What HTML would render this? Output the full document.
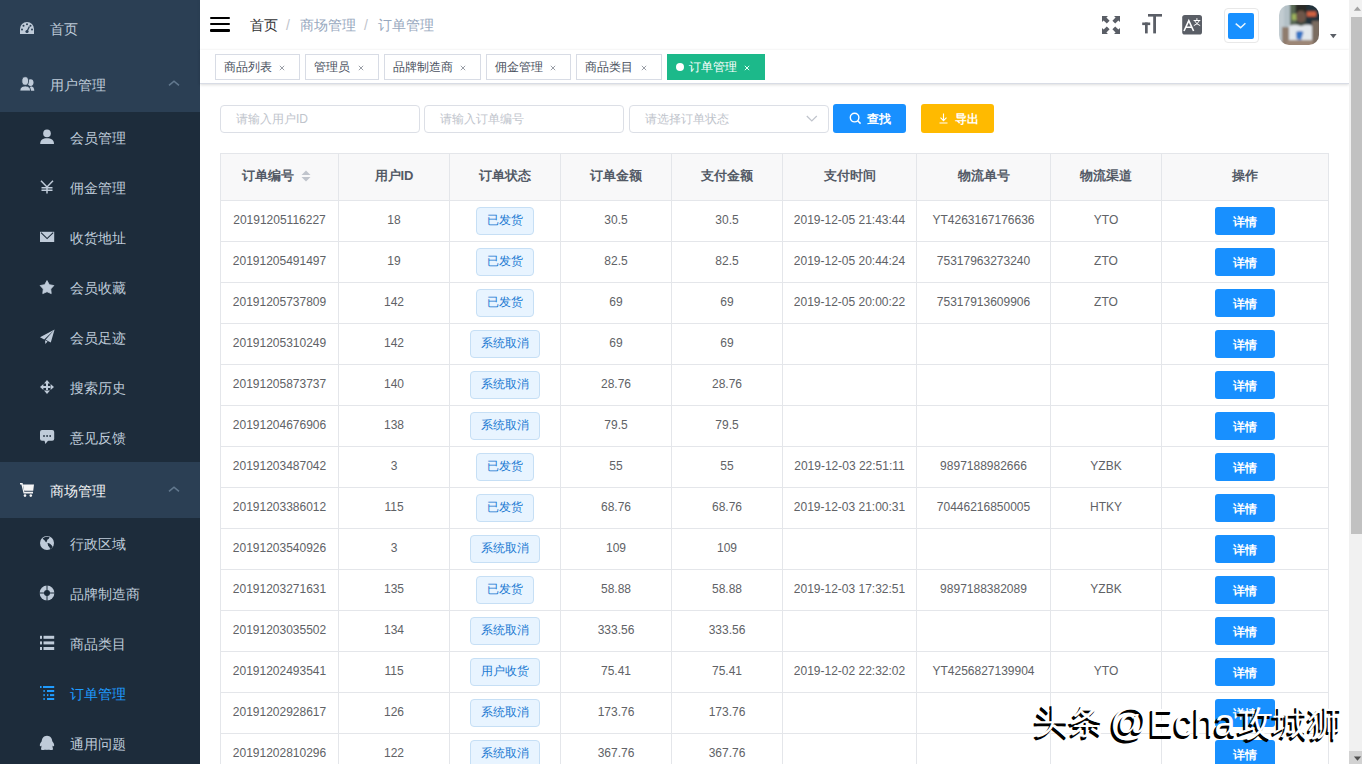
<!DOCTYPE html>
<html><head><meta charset="utf-8">
<style>
*{box-sizing:border-box}
html,body{margin:0;padding:0;width:1362px;height:764px;overflow:hidden;background:#fff;font-family:"Liberation Sans",sans-serif;position:relative}
.abs{position:absolute}
/* sidebar */
.sb{position:absolute;left:0;top:0;width:200px;height:764px;background:#2b3f54;overflow:hidden}
.sub{position:absolute;left:0;width:200px;background:#1d2c3b}
.mi{position:absolute;left:0;width:200px;color:#bfcbd9;font-size:14px}
.mi .tx{position:absolute;white-space:nowrap;line-height:16px}
.mi svg{position:absolute;fill:#bfcbd9}
.arr{position:absolute;left:168px;width:12px;height:8px}
/* navbar */
.nav{position:absolute;left:200px;top:0;width:1149px;height:50px;background:#fff;box-shadow:0 1px 4px rgba(0,21,41,.08)}
.bc{position:absolute;top:17px;font-size:14px;line-height:16px;white-space:nowrap;color:#97a8be}
/* tags */
.tags{position:absolute;left:200px;top:50px;width:1149px;height:34px;background:#fff;border-bottom:1px solid #d8dce5;box-shadow:0 1px 3px 0 rgba(0,0,0,.12),0 0 3px 0 rgba(0,0,0,.04)}
.tag{position:absolute;top:4px;height:26px;border:1px solid #d8dce5;color:#495060;background:#fff;font-size:12px;line-height:24px;padding:0 8px;white-space:nowrap}
.tag .x{display:inline-block;margin-left:6px;font-size:11px;color:#8a8f99}
/* filter */
.inp{position:absolute;top:105px;height:28px;border:1px solid #dcdfe6;border-radius:4px;color:#c0c4cc;font-size:12px;line-height:26px;padding-left:15px;white-space:nowrap}
.btn{position:absolute;top:104px;height:29px;border-radius:3px;color:#fff;font-size:12px;font-weight:bold;line-height:30px;white-space:nowrap}
/* table */
table{position:absolute;left:220px;top:153px;border-collapse:separate;border-spacing:0;table-layout:fixed;border-left:1px solid #e4e6ea;border-top:1px solid #e4e6ea;width:1109px}
th,td{border-right:1px solid #e4e6ea;border-bottom:1px solid #e4e6ea;text-align:center;padding:0;overflow:hidden;white-space:nowrap}
th{height:47px;padding-bottom:2px;background:#f8f8f9;color:#535a66;font-size:13px;font-weight:bold}
td{height:41px;padding-bottom:2px;color:#606266;font-size:12px}
.st{position:relative;top:1px;display:inline-block;height:28px;line-height:24px;padding:0 10px;border:1px solid #c6dff5;background:#e8f4ff;color:#2079d2;border-radius:4px;font-size:12px;vertical-align:middle}
.db{position:relative;top:1px;display:inline-block;width:60px;height:28px;line-height:30px;background:#1890ff;color:#fff;border-radius:3px;font-size:12px;font-weight:bold;vertical-align:middle}
/* scrollbar */
.scr{position:absolute;left:1349px;top:0;width:13px;height:764px;background:#f1f1f1}
.wm{position:absolute;color:#fff;white-space:nowrap;line-height:normal;text-shadow:-2px 2px 0 #000,-2.5px 2.5px 0 #000}
</style></head><body>

<div class="sb">
  <div class="mi" style="top:0;height:56px">
    <div class="tx" style="left:50px;top:21px">首页</div>
  </div>
  <div class="mi" style="top:56px;height:56px">
    <div class="tx" style="left:50px;top:21px">用户管理</div>
  </div>
  <div class="sub" style="top:112px;height:350px">
    <div class="mi" style="top:0;height:50px"><div class="tx" style="left:70px;top:18px">会员管理</div></div>
    <div class="mi" style="top:50px;height:50px"><div class="tx" style="left:70px;top:18px">佣金管理</div></div>
    <div class="mi" style="top:100px;height:50px"><div class="tx" style="left:70px;top:18px">收货地址</div></div>
    <div class="mi" style="top:150px;height:50px"><div class="tx" style="left:70px;top:18px">会员收藏</div></div>
    <div class="mi" style="top:200px;height:50px"><div class="tx" style="left:70px;top:18px">会员足迹</div></div>
    <div class="mi" style="top:250px;height:50px"><div class="tx" style="left:70px;top:18px">搜索历史</div></div>
    <div class="mi" style="top:300px;height:50px"><div class="tx" style="left:70px;top:18px">意见反馈</div></div>
  </div>
  <div class="mi" style="top:462px;height:56px;color:#f4f4f5">
    <div class="tx" style="left:50px;top:21px">商场管理</div>
  </div>
  <div class="sub" style="top:518px;height:246px">
    <div class="mi" style="top:0;height:50px"><div class="tx" style="left:70px;top:18px">行政区域</div></div>
    <div class="mi" style="top:50px;height:50px"><div class="tx" style="left:70px;top:18px">品牌制造商</div></div>
    <div class="mi" style="top:100px;height:50px"><div class="tx" style="left:70px;top:18px">商品类目</div></div>
    <div class="mi" style="top:150px;height:50px;color:#1f9cff"><div class="tx" style="left:70px;top:18px">订单管理</div></div>
    <div class="mi" style="top:200px;height:50px"><div class="tx" style="left:70px;top:18px">通用问题</div></div>
  </div>
</div>

<!--ICONS--><svg class="abs" style="left:0;top:0" width="200" height="764" viewBox="0 0 200 764">
<g fill="#bfcbd9">
<path d="M20,34 V29 A7,7 0 0 1 34,29 V34 Z"/>
<g fill="#2b3f54"><circle cx="23.5" cy="25.8" r="1"/><circle cx="27" cy="24.3" r="1"/><circle cx="30.5" cy="25.8" r="1"/><circle cx="22" cy="29.6" r="1"/><circle cx="32" cy="29.6" r="1"/><circle cx="27" cy="31.5" r="1.6"/></g>
<path d="M27,31.5 L29.4,26.5" stroke="#2b3f54" stroke-width="1.3"/>
<ellipse cx="30.6" cy="82.6" rx="2.9" ry="3.4"/><path d="M28,90.8 H34.3 C34.3,88 33.2,86.4 30.8,86.2 Z"/>
<ellipse cx="25.2" cy="81" rx="3.4" ry="4.3" stroke="#2b3f54" stroke-width="0.9"/><path d="M19.8,91 C19.8,87.6 21.8,85.9 25.2,85.9 C28.6,85.9 30.6,87.6 30.6,91 Z" stroke="#2b3f54" stroke-width="0.9"/>
<circle cx="47" cy="133.4" r="3.8"/><path d="M40.2,143.9 C40.2,140 43,138.3 47,138.3 C51,138.3 54,140 54,143.9 Z"/>
<path d="M41,180.8 L47,187 L53,180.8 M47,187 V193.6 M41.5,187.7 H52.5 M41.5,190.3 H52.5" fill="none" stroke="#bfcbd9" stroke-width="1.5"/>
<rect x="40" y="231.8" width="14.2" height="10.2"/><path d="M41,232.6 L47.1,238.6 L53.2,232.6" fill="none" stroke="#1d2c3b" stroke-width="1.1"/>
<polygon points="47.00,280.60 49.29,284.64 53.85,285.58 50.71,289.01 51.23,293.62 47.00,291.70 42.77,293.62 43.29,289.01 40.15,285.58 44.71,284.64" stroke="#bfcbd9" stroke-width="0.8" stroke-linejoin="round"/>
<path d="M54.6,329.4 L40,337.2 L44.2,339.4 Z M54.6,329.4 L45.6,339.8 L50.8,342.6 Z M45,340.3 L45.4,344 L47.6,341.4 Z"/>
<path d="M47,380 L50,383.4 H44 Z M47,394 L50,390.6 H44 Z M40,387 L43.4,384 V390 Z M54,387 L50.6,384 V390 Z M46,383 H48 V391 H46 Z M43,386 H51 V388 H43 Z"/>
<rect x="40" y="430" width="14.2" height="10.8" rx="2"/><path d="M44.3,440 L45.4,444 L48.6,440 Z"/>
<g fill="#1d2c3b"><rect x="43.2" y="435.2" width="1.6" height="1.6"/><rect x="46.3" y="435.2" width="1.6" height="1.6"/><rect x="49.4" y="435.2" width="1.6" height="1.6"/></g>
</g>
<g fill="#f4f4f5">
<path d="M20,483 H22.6 L24.3,491.8 H33 V493.6 H23.6 L21.4,484.6 H20 Z"/>
<path d="M22.9,484.6 H34 L33.2,490.8 H24.2 Z"/>
<circle cx="25" cy="495.6" r="1.3"/><circle cx="30.8" cy="495.6" r="1.3"/>
</g>
<path d="M169,85.4 L174,81.2 L179,85.4" fill="none" stroke="#62788e" stroke-width="1.6"/>
<path d="M169,491.4 L174,487.2 L179,491.4" fill="none" stroke="#62788e" stroke-width="1.6"/>
<g fill="#bfcbd9">
<circle cx="47" cy="543" r="7"/>
<path fill="#1d2c3b" d="M42.6,538.6 C44.5,536.7 47.5,536.4 49.6,537.2 L48.6,539.1 C47.6,539.3 46.9,539.9 47.1,541.1 L46.1,542.6 L45,541.1 C44.5,540.1 43.4,539.6 42.6,538.6 Z"/>
<path fill="#1d2c3b" d="M47.5,543 C49.6,543 52,545 52.6,546.8 C52.1,547.9 51.3,548.7 50.2,549.1 C49.8,547.7 49.2,546.6 48.2,545.9 Z"/>
<circle cx="47" cy="593" r="7.4"/>
<circle cx="47" cy="593" r="3" fill="#1d2c3b"/>
<path d="M47,585 V601 M39,593 H55" stroke="#1d2c3b" stroke-width="1"/>
<rect x="40" y="635.8" width="2" height="3"/><rect x="43.5" y="635.8" width="10.7" height="3"/>
<rect x="40" y="641.4" width="2" height="3"/><rect x="43.5" y="641.4" width="10.7" height="3"/>
<rect x="40" y="647" width="2" height="3"/><rect x="43.5" y="647" width="10.7" height="3"/>
<path d="M47,735.7 C50.6,735.7 52,738.5 52.3,741.3 C53.6,742.8 54.4,744.5 54.1,746 C53.4,746.6 52.9,746.2 52.5,745.6 C52.5,747 52.8,748.4 53.1,749.4 C51,750.3 49,749.6 47,749.9 C45,749.6 43,750.3 40.9,749.4 C41.2,748.4 41.5,747 41.5,745.6 C41.1,746.2 40.6,746.6 39.9,746 C39.6,744.5 40.4,742.8 41.7,741.3 C42,738.5 43.4,735.7 47,735.7 Z"/>
</g>
<g fill="#1f9cff">
<rect x="40" y="686" width="1.6" height="2"/><rect x="43" y="686" width="11.2" height="2"/>
<rect x="43.4" y="690" width="1.4" height="2"/><rect x="47" y="690" width="7.2" height="2"/>
<rect x="43.4" y="694.1" width="1.4" height="2"/><rect x="47" y="694.1" width="1.4" height="2"/><rect x="50" y="694.1" width="4.2" height="2"/>
<rect x="43.4" y="698" width="1.4" height="2"/><rect x="47" y="698" width="7.2" height="2"/>
</g>
</svg><!--/ICONS-->
<div class="nav">
  <div class="abs" style="left:10px;top:16.6px;width:20px;height:2.8px;background:#000;border-radius:1px"></div>
  <div class="abs" style="left:10px;top:22.7px;width:20px;height:2.8px;background:#000;border-radius:1px"></div>
  <div class="abs" style="left:10px;top:28.8px;width:20px;height:2.8px;background:#000;border-radius:1px"></div>
  <div class="bc" style="left:50px;color:#303133">首页</div>
  <div class="bc" style="left:86px;color:#c0c4cc">/</div>
  <div class="bc" style="left:100px">商场管理</div>
  <div class="bc" style="left:164px;color:#c0c4cc">/</div>
  <div class="bc" style="left:178px">订单管理</div>
  <svg class="abs" style="left:902px;top:16px" width="18" height="18" viewBox="0 0 18 18" fill="#5a5e66">
    <path d="M0,0 H6 L4.4,1.6 L7.6,4.8 L4.8,7.6 L1.6,4.4 L0,6 Z"/>
    <path d="M18,0 H12 L13.6,1.6 L10.4,4.8 L13.2,7.6 L16.4,4.4 L18,6 Z"/>
    <path d="M0,18 H6 L4.4,16.4 L7.6,13.2 L4.8,10.4 L1.6,13.6 L0,12 Z"/>
    <path d="M18,18 H12 L13.6,16.4 L10.4,13.2 L13.2,10.4 L16.4,13.6 L18,12 Z"/>
  </svg>
  <svg class="abs" style="left:942px;top:14px" width="20" height="20" viewBox="0 0 20 20" fill="#5a5e66">
    <rect x="6" y="0" width="14" height="2.6"/><rect x="11.2" y="0" width="2.8" height="19.4"/>
    <rect x="0.2" y="8.5" width="8" height="2.6"/><rect x="3" y="8.5" width="2.7" height="10.9"/>
  </svg>
  <svg class="abs" style="left:982px;top:15px" width="20" height="20" viewBox="0 0 20 20">
    <rect x="0.2" y="0" width="19.8" height="19.5" rx="2.6" fill="#5a5e66"/>
    <path d="M2,16 L6.8,5.6 L11.6,16 M3.9,12.3 H9.8" fill="none" stroke="#fff" stroke-width="1.6"/>
    <path d="M11.6,5.5 H18.3 M14.9,3.2 V5.5 M12.5,5.6 Q14.5,9.5 18.2,10.6 M17.4,5.6 Q15.5,9.5 11.8,10.6" fill="none" stroke="#fff" stroke-width="1"/>
  </svg>
  <div class="abs" style="left:1023.5px;top:8.3px;width:35px;height:35px;border:1px solid #e8e8e8;border-radius:4px"></div>
  <div class="abs" style="left:1028px;top:13px;width:25.6px;height:25.5px;background:#1890ff;border-radius:2px"></div>
  <svg class="abs" style="left:1028px;top:13px" width="26" height="26" viewBox="0 0 26 26"><path d="M7.7,10.7 L12.6,14.7 L17.4,10.2" fill="none" stroke="#e8f6ff" stroke-width="1.5"/></svg>
  <svg class="abs" style="left:1079px;top:5px" width="40" height="40" viewBox="0 0 40 40">
    <defs><clipPath id="avc"><rect width="40" height="40" rx="10"/></clipPath><filter id="avb" x="-20%" y="-20%" width="140%" height="140%"><feGaussianBlur stdDeviation="1"/></filter></defs>
    <g clip-path="url(#avc)"><g filter="url(#avb)">
      <rect x="-3" y="-3" width="46" height="46" fill="#3f4a40"/>
      <rect x="-3" y="-3" width="14" height="46" fill="#b3c0c6"/>
      <rect x="-3" y="-3" width="8" height="46" fill="#c2ccd1"/>
      <rect x="11" y="-3" width="6" height="22" fill="#5a6a55"/>
      <rect x="13" y="9" width="5.5" height="6" fill="#9db35c"/>
      <rect x="27" y="-3" width="16" height="30" fill="#22303a"/>
      <rect x="28" y="6.5" width="9" height="5" fill="#d3623f"/>
      <rect x="16.5" y="-1" width="11" height="9" fill="#2c2a25"/>
      <ellipse cx="22" cy="11.5" rx="5" ry="6" fill="#6d5748"/>
      <path d="M6,42 L8,22 Q14,18 22,21 Q29,18 34,21 L35,42 Z" fill="#e2e7eb"/>
      <rect x="3" y="22" width="7" height="20" fill="#8f7c6d"/>
      <rect x="33" y="16" width="8" height="26" fill="#7a6c60"/>
      <rect x="8" y="35" width="26" height="7" fill="#9c8676"/>
      <path d="M17,27 Q21,25 24.5,27 L22,35 L17.5,34 Z" fill="#3573c2"/>
    </g></g>
  </svg>
  <svg class="abs" style="left:1129.5px;top:33.7px" width="7" height="5" viewBox="0 0 7 5"><path d="M0,0 H6.6 L3.3,4.3 Z" fill="#5a5e66"/></svg>
</div>

<div class="tags">
  <div class="tag" style="left:15px;width:85px">商品列表<svg class="abs" style="right:14px;top:9.5px" width="6" height="6" viewBox="0 0 6 6"><path d="M0.8,0.8 L5.2,5.2 M5.2,0.8 L0.8,5.2" stroke="#9a9ea6" stroke-width="1"/></svg></div>
  <div class="tag" style="left:105px;width:74px">管理员<svg class="abs" style="right:14px;top:9.5px" width="6" height="6" viewBox="0 0 6 6"><path d="M0.8,0.8 L5.2,5.2 M5.2,0.8 L0.8,5.2" stroke="#9a9ea6" stroke-width="1"/></svg></div>
  <div class="tag" style="left:184px;width:97px">品牌制造商<svg class="abs" style="right:14px;top:9.5px" width="6" height="6" viewBox="0 0 6 6"><path d="M0.8,0.8 L5.2,5.2 M5.2,0.8 L0.8,5.2" stroke="#9a9ea6" stroke-width="1"/></svg></div>
  <div class="tag" style="left:286px;width:85px">佣金管理<svg class="abs" style="right:14px;top:9.5px" width="6" height="6" viewBox="0 0 6 6"><path d="M0.8,0.8 L5.2,5.2 M5.2,0.8 L0.8,5.2" stroke="#9a9ea6" stroke-width="1"/></svg></div>
  <div class="tag" style="left:376px;width:86px">商品类目<svg class="abs" style="right:14px;top:9.5px" width="6" height="6" viewBox="0 0 6 6"><path d="M0.8,0.8 L5.2,5.2 M5.2,0.8 L0.8,5.2" stroke="#9a9ea6" stroke-width="1"/></svg></div>
  <div class="tag" style="left:467px;width:98px;background:#1cb98a;border-color:#1cb98a;color:#fff"><span style="display:inline-block;width:8px;height:8px;border-radius:50%;background:#fff;margin-right:5px;vertical-align:0px"></span>订单管理<svg class="abs" style="right:14px;top:9.5px" width="6" height="6" viewBox="0 0 6 6"><path d="M0.8,0.8 L5.2,5.2 M5.2,0.8 L0.8,5.2" stroke="#e8fff5" stroke-width="1"/></svg></div>
</div>

<div class="inp" style="left:220px;width:200px">请输入用户ID</div>
<div class="inp" style="left:424px;width:200px">请输入订单编号</div>
<div class="inp" style="left:629px;width:200px">请选择订单状态<svg class="abs" style="left:176px;top:9px" width="12" height="8" viewBox="0 0 12 8"><path d="M0.8,1 L5.8,6 L10.8,1" fill="none" stroke="#c0c4cc" stroke-width="1.2"/></svg></div>
<div class="btn" style="left:833px;width:73px;background:#1890ff;padding-left:34px">查找<svg class="abs" style="left:16px;top:8px" width="13" height="13" viewBox="0 0 13 13"><circle cx="5.6" cy="5.6" r="4.3" fill="none" stroke="#fff" stroke-width="1.4"/><path d="M8.7,8.7 L11.6,11.6" stroke="#fff" stroke-width="1.5"/></svg></div>
<div class="btn" style="left:921px;width:73px;background:#ffba00;padding-left:34px">导出<svg class="abs" style="left:17px;top:8px" width="12" height="13" viewBox="0 0 12 13"><path d="M5.5,1.5 V8.5 M2.5,5.6 L5.5,8.6 L8.5,5.6 M1.5,11 H9.5" fill="none" stroke="#fff" stroke-width="1.1"/></svg></div>

<table>
<colgroup><col style="width:118px"><col style="width:111px"><col style="width:111px"><col style="width:111px"><col style="width:111px"><col style="width:134px"><col style="width:134px"><col style="width:111px"><col style="width:167px"></colgroup>
<thead><tr><th><span style="display:inline-block;vertical-align:middle">订单编号</span><span style="display:inline-block;width:24px;height:14px;position:relative;vertical-align:middle"><svg class="abs" style="left:7px;top:1px" width="10" height="12" viewBox="0 0 10 12"><path d="M5,0.5 L9.5,5 H0.5 Z M0.5,7 H9.5 L5,11.5 Z" fill="#c0c4cc"/></svg></span></th><th>用户ID</th><th>订单状态</th><th>订单金额</th><th>支付金额</th><th>支付时间</th><th>物流单号</th><th>物流渠道</th><th>操作</th></tr></thead>
<tbody>
<tr><td>20191205116227</td><td>18</td><td><span class="st">已发货</span></td><td>30.5</td><td>30.5</td><td>2019-12-05 21:43:44</td><td>YT4263167176636</td><td>YTO</td><td><span class="db">详情</span></td></tr>
<tr><td>20191205491497</td><td>19</td><td><span class="st">已发货</span></td><td>82.5</td><td>82.5</td><td>2019-12-05 20:44:24</td><td>75317963273240</td><td>ZTO</td><td><span class="db">详情</span></td></tr>
<tr><td>20191205737809</td><td>142</td><td><span class="st">已发货</span></td><td>69</td><td>69</td><td>2019-12-05 20:00:22</td><td>75317913609906</td><td>ZTO</td><td><span class="db">详情</span></td></tr>
<tr><td>20191205310249</td><td>142</td><td><span class="st">系统取消</span></td><td>69</td><td>69</td><td></td><td></td><td></td><td><span class="db">详情</span></td></tr>
<tr><td>20191205873737</td><td>140</td><td><span class="st">系统取消</span></td><td>28.76</td><td>28.76</td><td></td><td></td><td></td><td><span class="db">详情</span></td></tr>
<tr><td>20191204676906</td><td>138</td><td><span class="st">系统取消</span></td><td>79.5</td><td>79.5</td><td></td><td></td><td></td><td><span class="db">详情</span></td></tr>
<tr><td>20191203487042</td><td>3</td><td><span class="st">已发货</span></td><td>55</td><td>55</td><td>2019-12-03 22:51:11</td><td>9897188982666</td><td>YZBK</td><td><span class="db">详情</span></td></tr>
<tr><td>20191203386012</td><td>115</td><td><span class="st">已发货</span></td><td>68.76</td><td>68.76</td><td>2019-12-03 21:00:31</td><td>70446216850005</td><td>HTKY</td><td><span class="db">详情</span></td></tr>
<tr><td>20191203540926</td><td>3</td><td><span class="st">系统取消</span></td><td>109</td><td>109</td><td></td><td></td><td></td><td><span class="db">详情</span></td></tr>
<tr><td>20191203271631</td><td>135</td><td><span class="st">已发货</span></td><td>58.88</td><td>58.88</td><td>2019-12-03 17:32:51</td><td>9897188382089</td><td>YZBK</td><td><span class="db">详情</span></td></tr>
<tr><td>20191203035502</td><td>134</td><td><span class="st">系统取消</span></td><td>333.56</td><td>333.56</td><td></td><td></td><td></td><td><span class="db">详情</span></td></tr>
<tr><td>20191202493541</td><td>115</td><td><span class="st">用户收货</span></td><td>75.41</td><td>75.41</td><td>2019-12-02 22:32:02</td><td>YT4256827139904</td><td>YTO</td><td><span class="db">详情</span></td></tr>
<tr><td>20191202928617</td><td>126</td><td><span class="st">系统取消</span></td><td>173.76</td><td>173.76</td><td></td><td></td><td></td><td><span class="db">详情</span></td></tr>
<tr><td>20191202810296</td><td>122</td><td><span class="st">系统取消</span></td><td>367.76</td><td>367.76</td><td></td><td></td><td></td><td><span class="db">详情</span></td></tr>
</tbody>
</table>

<div class="scr">
  <svg class="abs" style="left:0;top:0" width="13" height="17" viewBox="0 0 13 17"><path d="M8.4,6.6 L12,10.7 H4.8 Z" fill="#a3a3a3"/></svg>
  <div class="abs" style="left:2px;top:17px;width:11px;height:517px;background:#c1c1c1"></div>
  <div class="abs" style="left:0;top:751px;width:13px;height:13px;background:#d2d2d2"></div>
  <svg class="abs" style="left:0;top:751px" width="13" height="13" viewBox="0 0 13 13"><path d="M4.9,5.6 H12.1 L8.5,9.8 Z" fill="#505050"/></svg>
</div>
<div class="wm" style="left:1034px;top:698px;font-size:35px">头条</div>
<div class="wm" style="left:1110px;top:701px;font-size:38px">@</div>
<div class="wm" style="left:1149px;top:702px;font-size:38px">Echa</div>
<div class="wm" style="left:1238px;top:700px;font-size:35px">攻城狮</div>
</body></html>
